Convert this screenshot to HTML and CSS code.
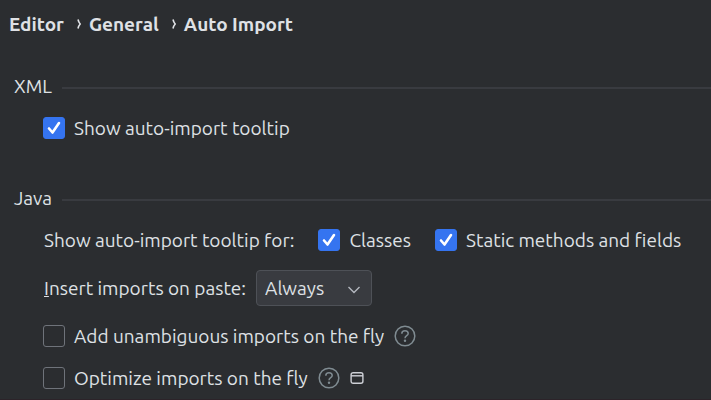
FILE: index.html
```html
<!DOCTYPE html>
<html lang="en">
<head>
<meta charset="utf-8">
<title>Auto Import</title>
<link rel="stylesheet" href="styles.css">
</head>
<body>
<nav class="breadcrumbs" aria-label="Breadcrumb">
  <a href="#editor">Editor</a>
  <svg class="separator" viewBox="0 0 4 10" aria-hidden="true"><path d="M1 .5Q1.600 3.200 3.200 5Q1.600 6.800 1 9.500"/></svg>
  <a href="#general">General</a>
  <svg class="separator" viewBox="0 0 4 10" aria-hidden="true"><path d="M1 .5Q1.600 3.200 3.200 5Q1.600 6.800 1 9.500"/></svg>
  <a href="#auto-import">Auto Import</a>
</nav>
<main>
  <section class="group">
    <h2>XML</h2>
    <div class="row">
      <label class="option"><input type="checkbox" checked>Show auto-import tooltip</label>
    </div>
  </section>
  <section class="group">
    <h2>Java</h2>
    <div class="row choices">
      <span>Show auto-import tooltip for:</span>
      <label class="option"><input type="checkbox" checked>Classes</label>
      <label class="option"><input type="checkbox" checked>Static methods and fields</label>
    </div>
    <div class="row paste">
      <label for="paste"><u>I</u>nsert imports on paste:</label>
      <span class="select">
        <select id="paste"><option>Always</option><option>Ask</option><option>Never</option></select>
        <svg class="chevron" viewBox="0 0 14 8" aria-hidden="true"><path d="M1.500 1L7 6.500L12.500 1"/></svg>
      </span>
    </div>
    <div class="row">
      <label class="option"><input type="checkbox">Add unambiguous imports on the fly</label>
      <button class="help" type="button" aria-label="Help"><svg viewBox="0 0 22 22"><circle cx="11" cy="11" r="9.800"/><path d="M7.800 8.700C7.800 6.800 9.200 5.800 11 5.800S14.200 6.900 14.200 8.600C14.200 10.700 11 10.800 11 13.200"/><circle class="dot" cx="11" cy="15.800" r="1.200"/></svg></button>
    </div>
    <div class="row">
      <label class="option"><input type="checkbox">Optimize imports on the fly</label>
      <button class="help" type="button" aria-label="Help"><svg viewBox="0 0 22 22"><circle cx="11" cy="11" r="9.800"/><path d="M7.800 8.700C7.800 6.800 9.200 5.800 11 5.800S14.200 6.900 14.200 8.600C14.200 10.700 11 10.800 11 13.200"/><circle class="dot" cx="11" cy="15.800" r="1.200"/></svg></button>
      <svg class="window" viewBox="0 0 14 12" role="img" aria-label="Project setting"><rect x="1.100" y=".7" width="11.800" height="10.600" rx="2"/><path d="M1 3.800H13"/></svg>
    </div>
  </section>
</main>
</body>
</html>
```

FILE: styles.css
```css
* {
  box-sizing: border-box;
}

html {
  background: #2b2d30;
}

body {
  min-height: 100vh;
  margin: 0;
  border-bottom: 1px solid #2c2329;
  color: #dfe1e5;
  font: 19px/24px Ubuntu, "Noto Sans", sans-serif;
  white-space: nowrap;
}

svg {
  display: block;
  fill: none;
  stroke: currentColor;
}

.breadcrumbs {
  display: flex;
  align-items: center;
  gap: 8px;
  padding: 12px 9px;
  font-weight: 700;
}

.breadcrumbs a {
  color: inherit;
  text-decoration: none;
}

.separator {
  width: 4px;
  height: 10px;
  margin-left: 5px;
  stroke-width: 1.6;
}

.group {
  padding: 26px 0 0 14px;
}

.group + .group {
  padding-top: 37px;
}

.group h2 {
  display: flex;
  align-items: center;
  gap: 10px;
  margin: 0 0 9px;
  font-size: 19px;
  font-weight: 400;
}

.group h2::after {
  content: "";
  flex: 1;
  height: 2px;
  margin-top: 4px;
  background: #393b40;
}

.row {
  display: flex;
  align-items: center;
  gap: 10px;
  min-height: 42px;
  padding-left: 30px;
}

.choices {
  gap: 25px;
}

.paste {
  min-height: 54px;
}

.option {
  display: flex;
  align-items: center;
  gap: 10px;
}

input {
  appearance: none;
  width: 22px;
  height: 22px;
  margin: 0 -1px;
  border: 1px solid #6f737a;
  border-radius: 3px;
}

input:checked {
  border-color: #3574f0;
  background: #3574f0 url("data:image/svg+xml,%3Csvg xmlns='http://www.w3.org/2000/svg' viewBox='0 0 20 20'%3E%3Cpath d='M5 10.500L8.500 14.500L15 5' fill='none' stroke='white' stroke-width='2.600' stroke-linecap='round' stroke-linejoin='round'/%3E%3C/svg%3E") center / 20px 20px no-repeat;
}

.select {
  display: grid;
  align-items: center;
  width: 116px;
}

.select > * {
  grid-area: 1 / 1;
}

select {
  appearance: none;
  width: 100%;
  height: 36px;
  padding: 0 8px;
  border: 1px solid #4e5157;
  border-radius: 4px;
  background: #393b40;
  color: inherit;
  font: inherit;
}

.chevron {
  justify-self: end;
  width: 14px;
  height: 8px;
  margin: 4px 11px 0 0;
  stroke: #b4b8bf;
  stroke-width: 1.4;
  pointer-events: none;
}

.help {
  width: 22px;
  height: 22px;
  padding: 0;
  border: 0;
  background: none;
  color: #7f8b91;
}

.help svg {
  stroke-width: 1.5;
}

.help .dot {
  fill: currentColor;
  stroke: none;
}

.window {
  width: 14px;
  height: 12px;
  color: #ced0d6;
  stroke-width: 1.4;
}
```
